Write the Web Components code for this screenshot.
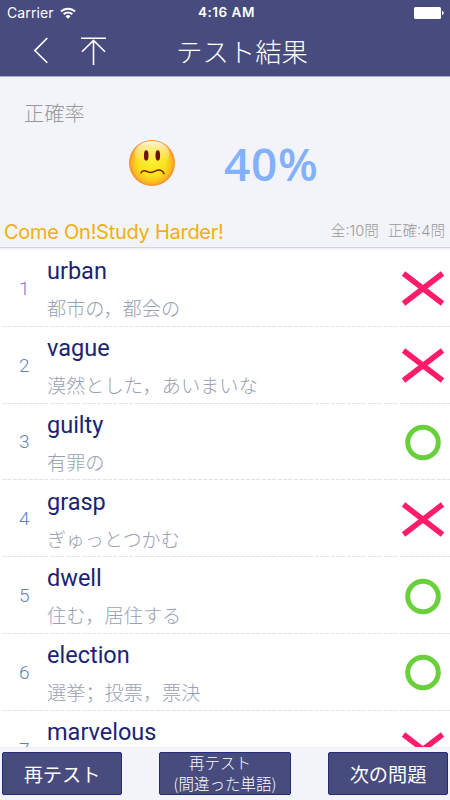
<!DOCTYPE html>
<html lang="ja">
<head>
<meta charset="utf-8">
<meta name="viewport" content="width=device-width, initial-scale=1">
<title>テスト結果</title>
<style>
    html, body {
        margin: 0;
        height: 100%;
        overflow: hidden;
    }

    body {
        --bar: #484b7d;
        --pane: #f3f4f9;
        --jp: "Noto Sans CJK JP", sans-serif;
        --latin: Inter, "Noto Sans CJK JP", sans-serif;
        background: #fff;
        font-family: var(--jp);
    }
</style>
</head>
<body>
<result-screen></result-screen>

<script>
class StatusBar extends HTMLElement {
    connectedCallback() {
        this.attachShadow({ mode: 'open' });
        this.shadowRoot.innerHTML = `
            <style>
                :host {
                    display: grid;
                    grid-template-columns: 1fr auto 1fr;
                    align-items: center;
                    height: 25px;
                    padding: 0 6px 0 7px;
                    color: #fff;
                    font: 400 14px/25px var(--latin);
                }
                .carrier { display: flex; align-items: center; gap: 6px; }
                .carrier span { letter-spacing: 0.1px; }
                .time { padding-left: 2px; font-weight: 600; font-size: 13.5px; letter-spacing: 0.5px; }
                svg { display: block; }
                .battery { justify-self: end; }
            </style>
            <div class="carrier">
                <span>Carrier</span>
                <svg width="16" height="12" viewBox="0 0 16 12" fill="none" stroke="#fff" stroke-width="2">
                    <path d="M1 4.5a10 10 0 0 1 14 0"/>
                    <path d="M3.7 7.2a6.2 6.2 0 0 1 8.6 0"/>
                    <path d="M8 11.8L5.5 9.3a3.6 3.6 0 0 1 5 0z" fill="#fff" stroke="none"/>
                </svg>
            </div>
            <div class="time">4:16 AM</div>
            <svg class="battery" width="30" height="12" viewBox="0 0 30 12" fill="#fff">
                <rect width="27" height="12" rx="1.5"/>
                <path d="M28 4c2.3.6 2.3 3.4 0 4z"/>
            </svg>
        `;
    }
}

class NavHeader extends HTMLElement {
    connectedCallback() {
        this.attachShadow({ mode: 'open' });
        this.shadowRoot.innerHTML = `
            <style>
                :host {
                    display: grid;
                    grid-template-columns: 166px auto 1fr;
                    align-items: center;
                    height: 51px;
                    color: #fff;
                }
                .icons { display: flex; gap: 32px; padding-left: 33px; }
                svg { display: block; }
                h1 {
                    margin: 0 0 0 10px;
                    font: 300 26.4px/51px var(--jp);
                }
            </style>
            <div class="icons">
                <svg width="16" height="27" viewBox="0 0 16 27" fill="none" stroke="#fff" stroke-width="1.6">
                    <path d="M14.3 1L1.8 13.6l12.5 12.2"/>
                </svg>
                <svg width="26" height="28" viewBox="0 0 26 28" fill="none" stroke="#fff" stroke-width="1.6">
                    <path d="M0 1.3h25M12.5 28V3.2M1 14.8L12.5 3.4 24 14.8"/>
                </svg>
            </div>
            <h1><slot></slot></h1>
        `;
    }
}

class WorriedFace extends HTMLElement {
    connectedCallback() {
        this.attachShadow({ mode: 'open' });
        this.shadowRoot.innerHTML = `
            <style>
                :host { display: block; width: 46px; height: 46px; }
                svg { display: block; }
            </style>
            <svg width="46" height="46" viewBox="0 0 46 46">
                <defs>
                    <radialGradient id="skin" cx=".5" cy=".5" r=".5">
                        <stop offset="0" stop-color="#fbee2a"/>
                        <stop offset=".6" stop-color="#f9e01c"/>
                        <stop offset=".85" stop-color="#fabc20"/>
                        <stop offset="1" stop-color="#f58a2c"/>
                    </radialGradient>
                    <linearGradient id="shine" x2="0" y2="1">
                        <stop offset="0" stop-color="#fffbe0" stop-opacity=".95"/>
                        <stop offset="1" stop-color="#fff36a" stop-opacity="0"/>
                    </linearGradient>
                </defs>
                <circle cx="23" cy="23" r="23" fill="url(#skin)"/>
                <ellipse cx="23" cy="13.5" rx="17.5" ry="12.5" fill="url(#shine)"/>
                <ellipse cx="17.2" cy="15.5" rx="2.3" ry="5.2" fill="#701008"/>
                <ellipse cx="28.8" cy="15.5" rx="2.3" ry="5.2" fill="#701008"/>
                <path d="M12 33c.3-2.2 3.2-2.8 6-1.5 3.2 1.6 5 1.5 8.2-.3 3.5-2 7.8-1.2 8.8 2.6" fill="none" stroke="#7c2208" stroke-width="1.5" stroke-linecap="round"/>
            </svg>
        `;
    }
}

class ScoreSummary extends HTMLElement {
    connectedCallback() {
        this.attachShadow({ mode: 'open' });
        this.shadowRoot.innerHTML = `
            <style>
                :host {
                    display: flex;
                    flex-direction: column;
                    height: 174px;
                    box-sizing: border-box;
                    background: var(--pane);
                    border-top: 1px solid #a9abc4;
                }
                .label {
                    padding: 21px 0 1px 24px;
                    font: 300 20.3px/28px var(--jp);
                    color: #999;
                }
                .score {
                    display: flex;
                    align-items: center;
                    gap: 49px;
                    height: 60px;
                    padding: 6px 0 0 129px;
                }
                .percent {
                    font: 600 46px/60px "Open Sans", sans-serif;
                    letter-spacing: 0.7px;
                    color: #82b1ff;
                }
                .foot {
                    display: flex;
                    align-items: center;
                    justify-content: space-between;
                    height: 28px;
                    margin-top: auto;
                    padding: 0 5px 0 4px;
                }
                .cheer {
                    font: 400 20px/28px var(--latin);
                    letter-spacing: -0.27px;
                    color: #f0b010;
                }
                .counts {
                    display: flex;
                    gap: 9px;
                    margin-top: -2px;
                    font: 300 14.6px/24px var(--latin);
                    color: #999;
                }
                .rule {
                    height: 2px;
                    margin-top: 1px;
                    border-top: 1px solid #d3d5dc;
                }
            </style>
            <div class="label">正確率</div>
            <div class="score">
                <worried-face></worried-face>
                <span class="percent">40%</span>
            </div>
            <div class="foot">
                <span class="cheer">Come On!Study Harder!</span>
                <div class="counts"><span>全:10問</span><span>正確:4問</span></div>
            </div>
            <div class="rule"></div>
        `;
    }
}

class WordRow extends HTMLElement {
    connectedCallback() {
        const correct = this.hasAttribute('correct');
        const mark = correct
            ? '<circle cx="22" cy="17.5" r="15.3" stroke="#69d03c" stroke-width="5"/>'
            : '<path d="M2.5 2.5l39 30M41.5 2.5l-39 30" stroke="#ff1c69" stroke-width="5.5"/>';

        this.attachShadow({ mode: 'open' });
        this.shadowRoot.innerHTML = `
            <style>
                :host {
                    display: grid;
                    grid-template-columns: 47px 1fr 44px;
                    align-items: center;
                    box-sizing: border-box;
                    height: 76.8px;
                    padding: 1px 5px 0 0;
                    background: repeating-linear-gradient(90deg, #e4e4e4 0 4px, transparent 4px 5.3px) 2px 100% / 100% 1px no-repeat;
                }
                .no {
                    padding: 0 0 0 19px;
                    font: 300 19px/24px Roboto, sans-serif;
                    color: #5f82bd;
                }
                .text { padding-top: 1.6px; }
                .word {
                    font: 400 23.5px/30px Roboto, sans-serif;
                    color: #1b2372;
                }
                .meaning {
                    height: 30px;
                    margin-top: 7px;
                    font: 300 19.2px/30px var(--jp);
                    color: #98a1b3;
                    white-space: nowrap;
                }
                svg { display: block; overflow: visible; }
            </style>
            <div class="no">${this.getAttribute('no')}</div>
            <div class="text">
                <div class="word">${this.getAttribute('word')}</div>
                <div class="meaning"><slot></slot></div>
            </div>
            <svg width="44" height="35" viewBox="0 0 44 35" fill="none">${mark}</svg>
        `;
    }
}

class ActionButton extends HTMLElement {
    connectedCallback() {
        this.attachShadow({ mode: 'open' });
        this.shadowRoot.innerHTML = `
            <style>
                :host { display: block; width: 120px; height: 43px; }
                :host([small]) { width: 132px; }
                button {
                    display: flex;
                    align-items: center;
                    justify-content: center;
                    width: 100%;
                    height: 100%;
                    padding: 0;
                    box-sizing: border-box;
                    border: 1px solid #252d78;
                    border-radius: 2px;
                    background: var(--bar);
                    color: #fff;
                    font: 400 19.2px/28px var(--jp);
                    white-space: nowrap;
                }
                :host([small]) button {
                    padding-bottom: 2px;
                    font-size: 15.5px;
                    font-weight: 300;
                    line-height: 20.5px;
                }
            </style>
            <button type="button"><span><slot></slot></span></button>
        `;
    }
}

class ResultScreen extends HTMLElement {
    connectedCallback() {
        // the semicolon sits at the left of its cell, as in the SC face
        const words = [
            ['urban', '都市の，都会の', false],
            ['vague', '漠然とした，あいまいな', false],
            ['guilty', '有罪の', true],
            ['grasp', 'ぎゅっとつかむ', false],
            ['dwell', '住む，居住する', true],
            ['election', '選挙<span class="semi" lang="zh-CN">；</span>投票，票決', true],
            ['marvelous', '', false]
        ];

        this.attachShadow({ mode: 'open' });
        this.shadowRoot.innerHTML = `
            <style>
                :host {
                    display: flex;
                    flex-direction: column;
                    height: 800px;
                    overflow: hidden;
                }
                header { background: var(--bar); flex: none; }
                score-summary { flex: none; }
                main { flex: 1; min-height: 0; overflow: hidden; }
                .semi { font-family: "Noto Sans CJK SC", sans-serif; }
                .first { margin-right: 10px; }
                footer {
                    display: flex;
                    justify-content: space-between;
                    flex: none;
                    box-sizing: border-box;
                    height: 53px;
                    padding: 4px 2px 0;
                    background: var(--pane);
                    border-top: 1px solid #ececf0;
                }
            </style>
            <header>
                <status-bar></status-bar>
                <nav-header>テスト結果</nav-header>
            </header>
            <score-summary></score-summary>
            <main>
                ${words.map(([word, meaning, ok], i) => `
                    <word-row no="${i + 1}" word="${word}" ${ok ? 'correct' : ''}>${meaning}</word-row>
                `).join('')}
            </main>
            <footer>
                <action-button>再テスト</action-button>
                <action-button small><span class="first">再テスト</span><br>(間違った単語)</action-button>
                <action-button>次の問題</action-button>
            </footer>
        `;
    }
}

customElements.define('status-bar', StatusBar);
customElements.define('nav-header', NavHeader);
customElements.define('worried-face', WorriedFace);
customElements.define('score-summary', ScoreSummary);
customElements.define('word-row', WordRow);
customElements.define('action-button', ActionButton);
customElements.define('result-screen', ResultScreen);
</script>
</body>
</html>
